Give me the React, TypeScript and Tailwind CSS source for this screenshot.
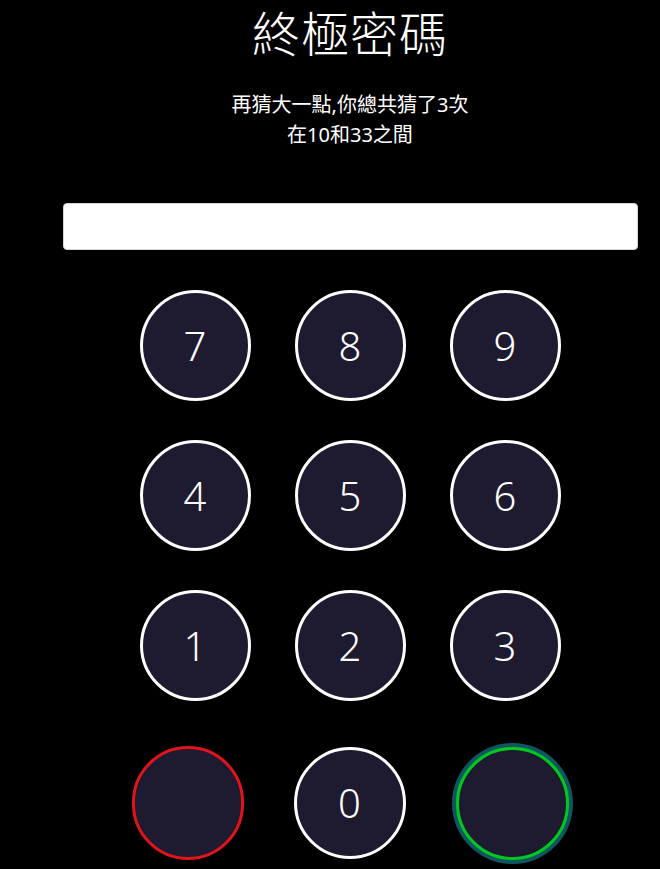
import React, { useState } from 'react';

const digits = ['7', '8', '9', '4', '5', '6', '1', '2', '3'];

const App = () => {
  const [value, setValue] = useState('');

  return (
    <div
      className="min-h-screen bg-black pl-[40px] text-white"
      style={{ fontFamily: '"Noto Sans", "Noto Sans CJK TC", sans-serif' }}
    >
      {/* Heading */}
      <h1 className="pt-[6px] text-center text-5xl font-light leading-[56px] tracking-[1px]">終極密碼</h1>
      <div className="mt-[28px] text-center text-xl leading-[30px]">
        <p>再猜大一點,你總共猜了3次</p>
        <p>在10和33之間</p>
      </div>

      {/* Input */}
      <input
        value={value}
        onChange={(e) => setValue(e.target.value)}
        className="mx-auto mt-[53px] block h-[47px] w-[575px] rounded-[4px] border border-gray-300 bg-white px-3 text-black outline-none"
      />

      {/* Keypad */}
      <div className="mx-auto mt-[40px] grid w-[421px] grid-cols-3 gap-x-[44px] gap-y-[39px]">
        {digits.map((d) => (
          <button
            key={d}
            onClick={() => setValue(value + d)}
            className="flex h-[111px] w-[111px] items-center justify-center rounded-full border-[3px] border-white bg-[#1e1a30] text-[40px] font-light text-white"
          >
            {d}
          </button>
        ))}
      </div>

      <div className="mt-[45px] flex items-center justify-center gap-[50px]">
        <button
          onClick={() => setValue('')}
          className="h-[114px] w-[112px] rounded-full border-[3px] border-[#e3131b] bg-[#1e1a30]"
        />
        <button
          onClick={() => setValue(value + '0')}
          className="flex h-[112px] w-[112px] items-center justify-center rounded-full border-[3px] border-white bg-[#1e1a30] text-[40px] font-light text-white"
        >
          0
        </button>
        <button className="h-[113px] w-[113px] rounded-full border-[3px] border-[#00c81e] bg-[#1e1a30] shadow-[0_0_0_4px_#0e5760]" />
      </div>
    </div>
  );
};

export default App;
